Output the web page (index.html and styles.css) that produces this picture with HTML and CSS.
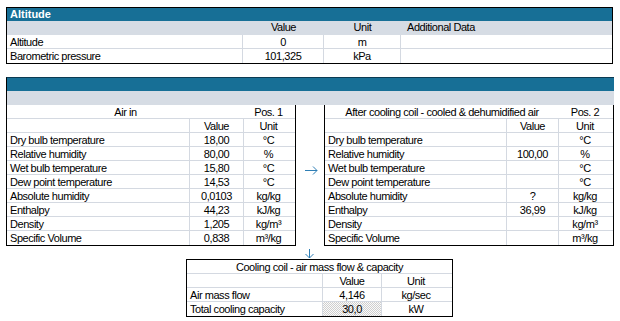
FILE: index.html
```html
<!DOCTYPE html>
<html>
<head>
<meta charset="utf-8">
<link rel="stylesheet" href="styles.css">
</head>
<body>
<div class="page">
  <section class="alt">
    <div class="title">Altitude</div>
    <div class="arow head"><span></span><span class="c">Value</span><span class="c">Unit</span><span class="l">Additional Data</span></div>
    <div class="arow"><span class="l">Altitude</span><span class="c">0</span><span class="c">m</span><span></span></div>
    <div class="arow"><span class="l">Barometric pressure</span><span class="c">101,325</span><span class="c">kPa</span><span></span></div>
  </section>

  <section class="proc">
    <div class="bar"></div>
    <div class="band"></div>
    <div class="tables">
      <div class="tbl t1">
        <div class="r cap"><span class="c">Air in</span><span class="c">Pos. 1</span></div>
        <div class="r"><span></span><span class="c">Value</span><span class="c">Unit</span></div>
        <div class="r"><span class="l">Dry bulb temperature</span><span class="c">18,00</span><span class="c">°C</span></div>
        <div class="r"><span class="l">Relative humidity</span><span class="c">80,00</span><span class="c">%</span></div>
        <div class="r"><span class="l">Wet bulb temperature</span><span class="c">15,80</span><span class="c">°C</span></div>
        <div class="r"><span class="l">Dew point temperature</span><span class="c">14,53</span><span class="c">°C</span></div>
        <div class="r"><span class="l">Absolute humidity</span><span class="c">0,0103</span><span class="c">kg/kg</span></div>
        <div class="r"><span class="l">Enthalpy</span><span class="c">44,23</span><span class="c">kJ/kg</span></div>
        <div class="r"><span class="l">Density</span><span class="c">1,205</span><span class="c">kg/m³</span></div>
        <div class="r"><span class="l">Specific Volume</span><span class="c">0,838</span><span class="c">m³/kg</span></div>
      </div>
      <div class="gap">
        <svg class="arrow-r" width="13" height="9" viewBox="0 0 13 9"><path d="M0 4.5H12M8 0.5L12 4.5L8 8.5" fill="none" stroke="#2f7fb5" stroke-width="1"/></svg>
      </div>
      <div class="tbl t2">
        <div class="r cap"><span class="c">After cooling coil - cooled &amp; dehumidified air</span><span class="c">Pos. 2</span></div>
        <div class="r"><span></span><span class="c">Value</span><span class="c">Unit</span></div>
        <div class="r"><span class="l">Dry bulb temperature</span><span class="c"></span><span class="c">°C</span></div>
        <div class="r"><span class="l">Relative humidity</span><span class="c">100,00</span><span class="c">%</span></div>
        <div class="r"><span class="l">Wet bulb temperature</span><span class="c"></span><span class="c">°C</span></div>
        <div class="r"><span class="l">Dew point temperature</span><span class="c"></span><span class="c">°C</span></div>
        <div class="r"><span class="l">Absolute humidity</span><span class="c">?</span><span class="c">kg/kg</span></div>
        <div class="r"><span class="l">Enthalpy</span><span class="c">36,99</span><span class="c">kJ/kg</span></div>
        <div class="r"><span class="l">Density</span><span class="c"></span><span class="c">kg/m³</span></div>
        <div class="r"><span class="l">Specific Volume</span><span class="c"></span><span class="c">m³/kg</span></div>
      </div>
    </div>
  </section>

  <div class="down">
    <svg width="9" height="10" viewBox="0 0 9 10"><path d="M4.5 0V9M0.5 5L4.5 9L8.5 5" fill="none" stroke="#2f7fb5" stroke-width="1"/></svg>
  </div>

  <div class="tbl t3">
    <div class="r cap"><span class="c">Cooling coil - air mass flow &amp; capacity</span></div>
    <div class="r"><span></span><span class="c">Value</span><span class="c">Unit</span></div>
    <div class="r"><span class="l">Air mass flow</span><span class="c">4,146</span><span class="c">kg/sec</span></div>
    <div class="r"><span class="l">Total cooling capacity</span><span class="c dots">30,0</span><span class="c">kW</span></div>
  </div>
</div>
</body>
</html>
```

FILE: styles.css
```css
* { box-sizing: border-box; }
html, body { margin: 0; padding: 0; background: #fff; }
body {
  font-family: "Liberation Sans", Arial, sans-serif;
  font-size: 11px;
  letter-spacing: -0.45px;
  color: #000;
}
.page { padding: 7px 0 0 6px; width: 620px; }

.l { text-align: left; padding-left: 3px; white-space: nowrap; }
.c { text-align: center; white-space: nowrap; }

/* Altitude block */
.alt { width: 607px; border: 1px solid #000; }
.title {
  height: 13px; line-height: 13px;
  background: #176f96; color: #fff;
  font-weight: bold; letter-spacing: 0;
  padding-left: 3px;
}
.arow {
  display: grid;
  grid-template-columns: 236px 81px 77px 211px;
  height: 14px;
  border-bottom: 1px solid #d4d9e1;
}
.arow > span { border-right: 1px solid #d4d9e1; padding-top: 2px; line-height: 11px; }
.arow > span:last-child { border-right: 0; }
.arow:last-child { border-bottom: 0; }
.arow.head { background: #d6dce4; border-bottom: 0; }
.arow.head > span { border-right: 0; padding-top: 1px; }
.arow.head .l { padding-left: 6px; }

/* process block */
.proc { margin-top: 13px; width: 608px; }
.bar { height: 14px; background: #176f96; border-top: 1px solid #0b3a52; border-left: 1px solid #000; }
.band { height: 14px; background: #d6dce4; border-left: 1px solid #000; }
.tables { display: flex; align-items: flex-start; }
.gap { width: 28px; padding: 61px 0 0 9px; }
.arrow-r { display: block; }

.tbl { border-left: 1px solid #000; border-right: 1px solid #000; border-bottom: 1px solid #000; }
.tbl .r {
  display: grid;
  height: 14px;
  border-bottom: 1px solid #d4d9e1;
}
.tbl .r > span { border-right: 1px solid #d4d9e1; padding-top: 2px; line-height: 11px; }
.tbl .r > span:last-child { border-right: 0; }
.tbl .r:last-child { border-bottom: 0; }
.tbl .r.cap > span { border-right: 0; }

.t1, .t2 { width: 290px; }
.t1 .r { grid-template-columns: 183px 54px 49px; }
.t1 .r.cap { grid-template-columns: 237px 49px; }
.t2 .r { grid-template-columns: 182px 52px 52px; }
.t2 .r.cap { grid-template-columns: 234px 52px; }

.down { height: 13px; padding: 3px 0 0 299px; }
.down svg { display: block; }

.t3 { width: 267px; margin-left: 180px; border-top: 1px solid #000; }
.t3 .r { grid-template-columns: 136px 59px 68px; }
.t3 .r.cap { grid-template-columns: 1fr; }
.dots {
  background: repeating-conic-gradient(#cfcfcf 0 25%, #fafafa 0 50%) 0 0 / 2px 2px;
}
```
